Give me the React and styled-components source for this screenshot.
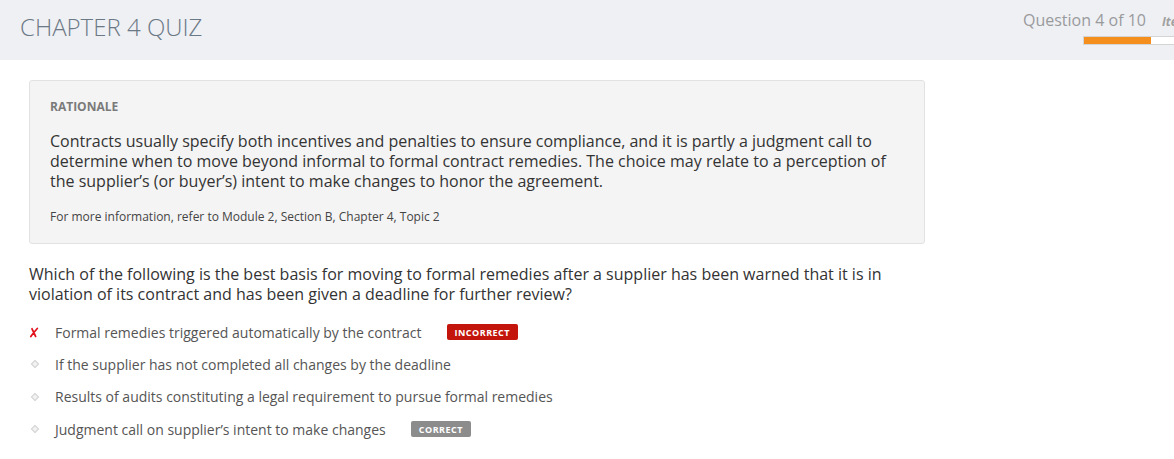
import React from "react";
import styled, { createGlobalStyle } from "styled-components";

const GlobalStyle = createGlobalStyle`
    body {
        margin: 0;
        background: #ffffff;
        font-family: "Open Sans", "Liberation Sans", sans-serif;
        overflow: hidden;
    }
`;

const Header = styled.header`
    display: flex;
    height: 60px;
    background-color: #eff0f4;
    padding-left: 20px;
    box-sizing: border-box;
    overflow: hidden;

    .header__title {
        flex: 1;
        margin: 0;
        padding-top: 11px;
        font-size: 24px;
        line-height: 32px;
        font-weight: 300;
        color: #6b7885;
    }
`;

const Progress = styled.div`
    width: 151px;
    flex-shrink: 0;
    padding-top: 8px;
    white-space: nowrap;

    .progress__row {
        display: flex;
        align-items: baseline;
        gap: 16px;
    }

    .progress__label {
        font-size: 16px;
        line-height: 24px;
        color: #999a9c;
    }

    .progress__item {
        font-size: 12px;
        font-weight: 700;
        font-style: italic;
        color: #a0a0a0;
    }
`;

const Bar = styled.div`
    margin: 4px 0 0 60px;
    width: 100px;
    height: 9px;
    box-sizing: border-box;
    border: 1px solid #d4d4d4;
    background: #ffffff;

    span {
        display: block;
        height: 100%;
        background: #f48f1e;
    }
`;

const Main = styled.main`
    width: 896px;
    margin: 20px 0 0 29px;
`;

const Rationale = styled.section`
    background-color: #f4f4f4;
    border: 1px solid #e2e2e2;
    border-radius: 3px;
    padding: 18px 20px 18px;

    .rationale__label {
        font-size: 12px;
        line-height: 16px;
        font-weight: 700;
        color: #7a7a7a;
    }

    .rationale__text {
        margin: 16px 0 0;
        font-size: 16px;
        line-height: 20px;
        color: #333333;
    }

    .rationale__ref {
        margin: 18px 0 0;
        font-size: 12px;
        line-height: 16px;
        color: #444444;
    }
`;

const Question = styled.p`
    margin: 20px 0 12px;
    font-size: 16px;
    line-height: 20px;
    color: #333333;
`;

const Options = styled.ul`
    list-style: none;
    margin: 0;
    padding: 0;
`;

const Option = styled.li`
    display: flex;
    align-items: center;
    height: 32.3px;
    font-size: 14px;
    color: #555555;

    .option__mark {
        width: 26px;
        flex-shrink: 0;
        display: flex;
        align-items: center;
    }
`;

const Dot = styled.span`
    display: block;
    width: 4px;
    height: 4px;
    margin-left: 3px;
    border: 1px solid #d2d2d2;
    background: #f2f2f2;
    transform: rotate(45deg);
`;

const Badge = styled.span`
    margin-left: 25px;
    height: 16px;
    padding: 0 8px;
    display: inline-flex;
    align-items: center;
    border-radius: 2px;
    background-color: ${(p) => (p.$correct ? "#8c8c8c" : "#c3150c")};
    color: #ffffff;
    font-size: 9px;
    font-weight: 700;
    letter-spacing: 0.5px;
`;

const Cross = () => (
    <svg width="10" height="11" viewBox="0 0 10 11">
        <path d="M3 1.8 L6.6 9.4 M8.3 1.5 Q5 5 1.8 9.6" stroke="#e0131d" strokeWidth="1.8" fill="none" strokeLinecap="round" />
    </svg>
);

const options = [
    { text: "Formal remedies triggered automatically by the contract", wrong: true },
    { text: "If the supplier has not completed all changes by the deadline" },
    { text: "Results of audits constituting a legal requirement to pursue formal remedies" },
    { text: "Judgment call on supplier’s intent to make changes", correct: true },
];

const App = () => {
    return (
        <>
            <GlobalStyle />
            <Header>
                <h1 className="header__title">CHAPTER 4 QUIZ</h1>
                <Progress>
                    <div className="progress__row">
                        <span className="progress__label">Question 4 of 10</span>
                        <span className="progress__item">Item 4</span>
                    </div>
                    <Bar>
                        <span style={{ width: "68%" }} />
                    </Bar>
                </Progress>
            </Header>
            <Main>
                <Rationale>
                    <div className="rationale__label">RATIONALE</div>
                    <p className="rationale__text">
                        Contracts usually specify both incentives and penalties to ensure compliance, and it is partly a judgment call to
                        determine when to move beyond informal to formal contract remedies. The choice may relate to a perception of
                        the supplier’s (or buyer’s) intent to make changes to honor the agreement.
                    </p>
                    <p className="rationale__ref">For more information, refer to Module 2, Section B, Chapter 4, Topic 2</p>
                </Rationale>
                <Question>
                    Which of the following is the best basis for moving to formal remedies after a supplier has been warned that it is in
                    violation of its contract and has been given a deadline for further review?
                </Question>
                <Options>
                    {options.map((o) => (
                        <Option key={o.text}>
                            <span className="option__mark">{o.wrong ? <Cross /> : <Dot />}</span>
                            {o.text}
                            {o.wrong && <Badge>INCORRECT</Badge>}
                            {o.correct && <Badge $correct>CORRECT</Badge>}
                        </Option>
                    ))}
                </Options>
            </Main>
        </>
    );
};

export default App;
